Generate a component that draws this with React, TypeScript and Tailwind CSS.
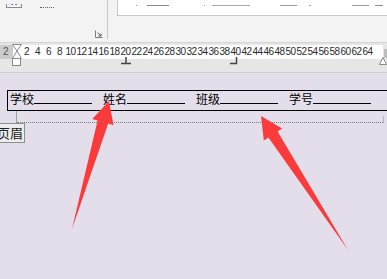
const rulerNumbers = Array.from({ length: 32 }, (_, i) => (i + 1) * 2)

const fields = ["学校", "姓名", "班级", "学号"]

function LauncherIcon() {
  return (
    <svg width="8" height="8" viewBox="0 0 8 8" className="block">
      <path d="M0.5 0.5 V7.5 H7.5" fill="none" stroke="#7a7a7a" strokeWidth="1" />
      <path d="M2.5 2.5 L6 6 M3.5 6 H6 V3.5" fill="none" stroke="#5a5a5a" strokeWidth="1" />
    </svg>
  )
}

function Arrows() {
  return (
    <svg
      width="387"
      height="279"
      viewBox="0 0 387 279"
      className="absolute inset-0 pointer-events-none"
    >
      <polygon
        points="109,101 113.5,125.2 108.2,123.6 72,229 97.6,120.6 92.3,119"
        fill="#fb3b3b"
      />
      <polygon
        points="261,116 282.2,128.5 277.6,131.5 348,250 268.4,137.5 263.8,140.5"
        fill="#fb3b3b"
      />
    </svg>
  )
}

export default function App() {
  return (
    <div
      className="relative w-[387px] h-[279px] overflow-hidden flex flex-col"
      style={{ fontFamily: '"Liberation Sans", "Noto Sans CJK SC", sans-serif' }}
    >
      {/* ribbon */}
      <div className="h-[43px] shrink-0 bg-[#f3f3f3] border-b border-[#d4d4d4] flex">
        <div className="w-[108px] h-[39px] border-r border-[#c8c8c8] flex flex-col">
          <div className="flex items-start pt-[4px]">
            <div className="ml-[6px] w-[16px] h-[4px] border border-t-0 border-[#8a8a8a] flex justify-center gap-[2px]">
              <div className="w-[2px] h-[1px] bg-[#4a8ad6]" />
              <div className="w-[2px] h-[1px] bg-[#4a8ad6]" />
            </div>
            <div className="ml-[18px] mt-[3px] w-[14px] border-b border-dotted border-[#666]" />
          </div>
          <div className="mt-auto mb-[1px] ml-auto mr-[4px]">
            <LauncherIcon />
          </div>
        </div>
        <div className="w-[9px]" />
        <div className="flex-1 h-[16px] bg-white border-l border-b border-[#c8c8c8] flex items-start pt-[5px]">
          <div className="ml-[18px] w-[1px] h-[1px] bg-[#999]" />
          <div className="ml-[10px] w-[22px] h-[1px] bg-[#888]" />
          <div className="ml-[35px] w-[1px] h-[1px] bg-[#999]" />
          <div className="ml-[7px] w-[38px] h-[1px] bg-[#aaa]" />
          <div className="ml-[30px] w-[17px] h-[1px] bg-[#999]" />
          <div className="ml-[12px] w-[2px] h-[1px] bg-[#999]" />
          <div className="ml-[41px] w-[17px] h-[1px] bg-[#999]" />
          <div className="ml-[6px] w-[8px] h-[1px] bg-[#888]" />
        </div>
      </div>

      {/* ruler */}
      <div className="relative h-[30px] shrink-0 bg-[#e6e6e6] border-b border-[#cfcfcf]">
        <div className="flex h-[14px] mt-[2px]">
          <div className="w-[13px] bg-[#cbcbcb] text-[#555] text-[10px] leading-[14px] pl-[3px]">2</div>
          <div className="flex-1 mr-[4px] bg-white flex pl-[8px] text-[10px] leading-[14px] text-[#2a2a2a]">
            {rulerNumbers.map((n) => (
              <span key={n} className="w-[11px] shrink-0 text-center tracking-[-0.6px] whitespace-nowrap">
                {n}
              </span>
            ))}
          </div>
        </div>
        <div className="absolute right-0 top-[6px] w-[3px] h-[9px] bg-[#bdbdbd]" />
        <svg width="12" height="24" viewBox="0 0 12 24" className="absolute left-[11px] top-[1px]">
          <path d="M1.5 0.5 H10.5 L6 7 Z" fill="#fff" stroke="#8a8a8a" />
          <path d="M6 7 L1.5 14.5 H10.5 Z" fill="#fff" stroke="#8a8a8a" />
          <rect x="1.5" y="14.5" width="8" height="7" fill="#fff" stroke="#8a8a8a" />
        </svg>
        <svg width="10" height="8" viewBox="0 0 10 8" className="absolute left-[121px] top-[14px]">
          <path d="M5 0 V6 M0 6.5 H10" stroke="#444" strokeWidth="1.5" fill="none" />
        </svg>
        <svg width="8" height="8" viewBox="0 0 8 8" className="absolute left-[230px] top-[14px]">
          <path d="M6.5 0 V7 M0 6.5 H7" stroke="#444" strokeWidth="1.5" fill="none" />
        </svg>
        <svg width="8" height="8" viewBox="0 0 8 8" className="absolute left-[379px] top-[14px]">
          <path d="M4 0.5 L7.5 7.5 H0.5 Z" fill="#fff" stroke="#8a8a8a" />
        </svg>
      </div>

      {/* page */}
      <div className="flex-1 bg-[#e3deea] pt-[17px]">
        <div className="ml-[7px] w-[400px] h-[21px] border border-black flex items-start pl-[2px] gap-[11px] text-[12px] leading-[12px] text-black">
          {fields.map((label) => (
            <div key={label} className="flex items-start">
              <span className="mt-[3px] whitespace-nowrap">{label}</span>
              <span className="w-[58px] h-[13px] border-b border-black" />
            </div>
          ))}
        </div>
        <div className="ml-[16px] w-[368px] h-[12px] flex items-end border-l border-[#a0a0a0]">
          <div className="flex-1 border-b border-dotted border-[#7a7a7a]" />
          <div className="w-px h-[7px] bg-[#b4b4b4]" />
        </div>
        <div className="-ml-px w-[26px] h-[20px] border border-[#8e8e8e] bg-[#ececec] flex items-center justify-end pr-[1px] text-[13px] leading-[13px] text-[#222] overflow-hidden whitespace-nowrap">
          页眉
        </div>
      </div>

      <Arrows />
    </div>
  )
}
